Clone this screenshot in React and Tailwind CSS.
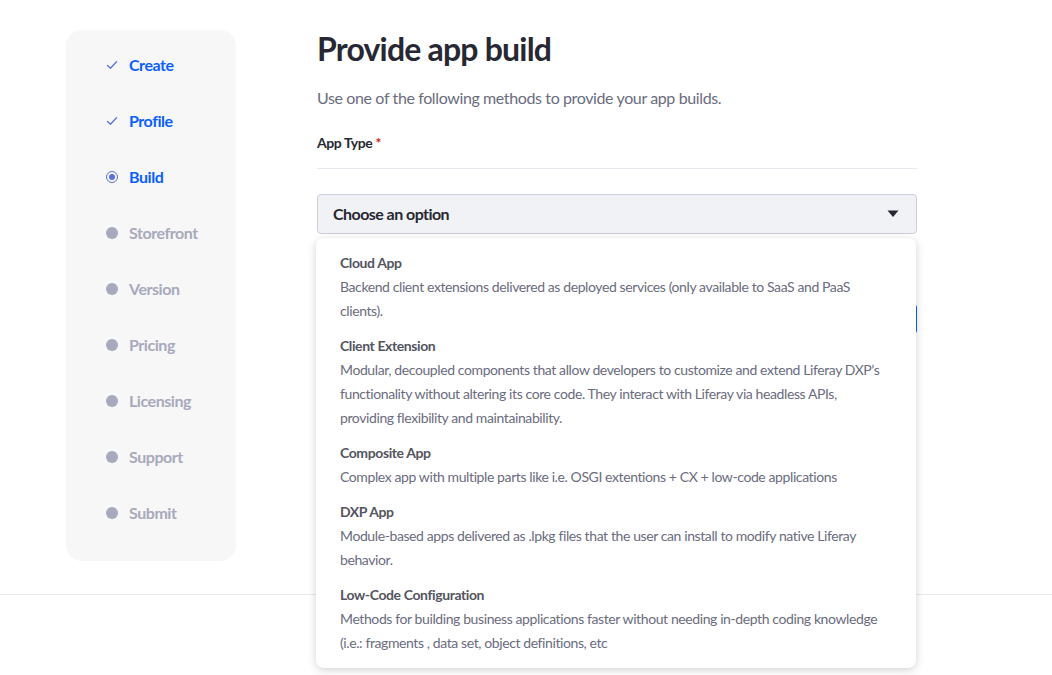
import React from 'react';

const steps = [
  { label: 'Create', state: 'done' },
  { label: 'Profile', state: 'done' },
  { label: 'Build', state: 'active' },
  { label: 'Storefront', state: 'todo' },
  { label: 'Version', state: 'todo' },
  { label: 'Pricing', state: 'todo' },
  { label: 'Licensing', state: 'todo' },
  { label: 'Support', state: 'todo' },
  { label: 'Submit', state: 'todo' },
];

const options = [
  {
    title: 'Cloud App',
    desc: 'Backend client extensions delivered as deployed services (only available to SaaS and PaaS clients).',
  },
  {
    title: 'Client Extension',
    desc: "Modular, decoupled components that allow developers to customize and extend Liferay DXP\u2019s functionality without altering its core code. They interact with Liferay via headless APIs, providing flexibility and maintainability.",
  },
  {
    title: 'Composite App',
    desc: 'Complex app with multiple parts like i.e. OSGI extentions + CX + low-code applications',
  },
  {
    title: 'DXP App',
    desc: 'Module-based apps delivered as .lpkg files that the user can install to modify native Liferay behavior.',
  },
  {
    title: 'Low-Code Configuration',
    desc: 'Methods for building business applications faster without needing in-depth coding knowledge (i.e.: fragments , data set, object definitions, etc',
  },
];

const StepIcon = ({ state }) => {
  if (state === 'done') {
    return (
      <svg width="12" height="12" viewBox="0 0 12 12" fill="none">
        <path d="M1.5 6.5 L4.5 9.2 L10.5 2.8" stroke="#5a6fe6" strokeWidth="1.3" strokeLinecap="round" strokeLinejoin="round" />
      </svg>
    );
  }
  if (state === 'active') {
    return (
      <span className="w-3 h-3 rounded-full border-[1.5px] border-[#5a6fe6] flex items-center justify-center">
        <span className="w-[6px] h-[6px] rounded-full bg-[#5a6fe6]" />
      </span>
    );
  }
  return <span className="w-3 h-3 rounded-full bg-[#a7a9bc]" />;
};

const App = () => {
  return (
    <div className="relative w-[1052px] h-[675px] bg-white overflow-hidden font-['Lato',sans-serif]">
      {/* FOOTER DIVIDER */}
      <div className="absolute left-0 right-0 top-[594px] border-t border-[#e7e7ed]" />

      <div className="relative flex pl-[66px] pt-[30px]">
        {/* STEPPER */}
        <aside className="w-[170px] h-[531px] bg-[#f7f7f8] rounded-2xl pt-[22px] pl-[40px]">
          {steps.map((s) => (
            <div key={s.label} className="h-[56px] flex items-start">
              <div className="h-[26px] flex items-center gap-[11px]">
                <span className="w-3 flex justify-center"><StepIcon state={s.state} /></span>
                <span
                  className={
                    'text-[16px] font-bold tracking-[-0.45px] ' +
                    (s.state === 'todo' ? 'text-[#a7a9bc]' : 'text-[#0b5fff]')
                  }
                >
                  {s.label}
                </span>
              </div>
            </div>
          ))}
        </aside>

        {/* MAIN */}
        <main className="ml-[81px] w-[600px]">
          <h1 className="text-[32px] leading-[40px] font-bold tracking-[-0.8px] text-[#272833] mt-[-1px]">Provide app build</h1>
          <p className="mt-[19px] text-[16px] leading-[20px] tracking-[-0.38px] text-[#6b6c7e]">
            Use one of the following methods to provide your app builds.
          </p>
          <p className="mt-[25px] text-[14px] leading-[20px] font-bold tracking-[-0.4px] text-[#272833]">
            App Type <span className="text-[#da1414]">*</span>
          </p>
          <div className="mt-[15px] border-t border-[#e7e7ed]" />

          <div className="relative mt-[25px]">
            <div className="h-[40px] bg-[#f1f2f5] border border-[#cdced9] rounded-[4px] flex items-center justify-between pl-[15px] pr-[17px]">
              <span className="text-[16px] font-bold tracking-[-0.55px] text-[#272833]">Choose an option</span>
              <svg width="12" height="8" viewBox="0 0 12 8">
                <path d="M0.5 0.5 H11.5 L6 7 Z" fill="#272833" />
              </svg>
            </div>

            {/* blue element behind dropdown */}
            <div className="absolute right-0 top-[110px] w-[200px] h-[30px] border-r-2 border-[#0b5fff] rounded" />

            {/* DROPDOWN */}
            <div className="absolute left-[-1px] top-[44px] w-[600px] bg-white rounded-lg shadow-[0_2px_8px_rgba(0,0,0,0.18)] px-[24px] pt-[13px] pb-[2px] z-10">
              {options.map((o) => (
                <div key={o.title} className="pb-[11px]">
                  <p className="text-[14px] leading-[24px] font-bold tracking-[-0.4px] text-[#54555f]">{o.title}</p>
                  <p className="text-[14px] leading-[24px] tracking-[-0.4px] text-[#6b6c7e]">{o.desc}</p>
                </div>
              ))}
            </div>
          </div>
        </main>
      </div>
    </div>
  );
};

export default App;
